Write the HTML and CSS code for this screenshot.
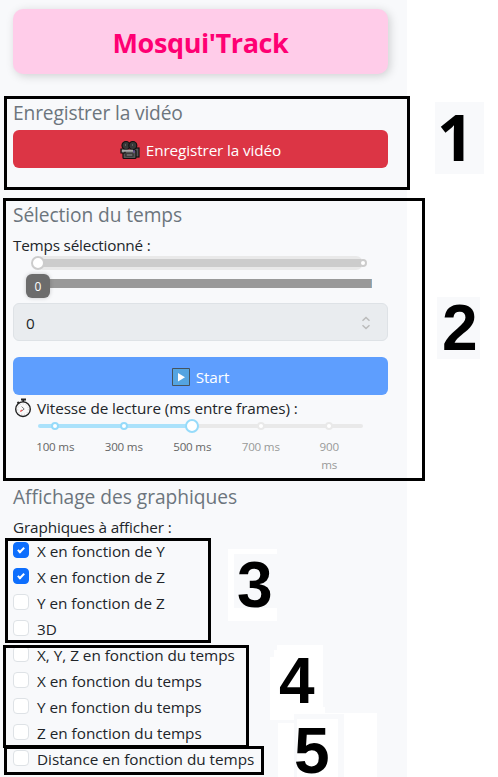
FILE: index.html
```html
<!DOCTYPE html>
<html lang="fr">
<head>
<meta charset="utf-8">
<title>Mosqui'Track</title>
<link rel="stylesheet" href="styles.css">
</head>
<body>
<aside class="sidebar">
  <h1 class="brand"><span>Mosqui'Track</span></h1>
  <section class="record">
    <h2>Enregistrer la vidéo</h2>
    <button class="btn danger">
      <svg width="20" height="20" viewBox="0 0 20 20"><g stroke="#111" stroke-width="1.2"><rect x="13" y="8" width="6" height="9" fill="#555"/><rect x="3" y="10" width="13" height="8.5" rx="1" fill="#555"/><path d="M1 9h4v4H1z" fill="#777"/><circle cx="6" cy="5.5" r="4" fill="#383838"/><circle cx="12.8" cy="5.5" r="4" fill="#383838"/></g><path d="M2 10.7h11" stroke="#aaa" stroke-width="2"/><path d="M5.5 15h8" stroke="#222" stroke-width="3"/><path d="M6.5 15h6" stroke="#aaa"/><path d="M14 10v3" stroke="#7653b5"/><path d="M5 5h1M12 5h1" stroke="#888"/></svg>
      <span class="t-record">Enregistrer la vidéo</span>
    </button>
  </section>
  <section class="time">
    <h2 class="h-time">Sélection du temps</h2>
    <label class="label t-time">Temps sélectionné :</label>
    <div class="range"><i class="handle"></i><i class="end"></i></div>
    <div class="marks"><b class="tip">0</b></div>
    <div class="field"><span>0</span>
      <svg width="10" height="14" viewBox="0 0 10 14" fill="none" stroke="#bbb" stroke-width="1.5"><path d="M1.5 4.8 5 1.5l3.5 3.3M1.5 9.2 5 12.5l3.5-3.3"/></svg>
    </div>
    <button class="btn primary">
      <svg width="18" height="18" viewBox="0 0 18 18"><path d="M.5.5h17v17H.5z" fill="#54a4e1" stroke="#46535d"/><path d="M6 5v8.5l7-4.25z" fill="#fff"/></svg>
      <span class="t-start">Start</span>
    </button>
    <div class="speed-label">
      <svg width="18" height="20" viewBox="0 0 18 20"><path d="M7 1.5h5" stroke="#222" stroke-width="2"/><path d="M9.3 2v2M3.5 4l1.5 1.5" stroke="#222" stroke-width="1.8"/><circle cx="9" cy="11.2" r="7.3" fill="#fafafa" stroke="#222" stroke-width="1.4"/><circle cx="9" cy="11.2" r="5.3" fill="none" stroke="#ccc" stroke-dasharray="1 2"/><path d="m7.6 8.6 2.6 2.4-2.6 2" fill="none" stroke="#777"/><path d="m6.2 13.4 2-1.5" stroke="#ef5555" stroke-width="1.3"/></svg>
      <span class="label t-speed">Vitesse de lecture (ms entre frames) :</span>
    </div>
    <div class="speed">
      <div class="stop on"><i></i><span>100 ms</span></div>
      <div class="stop on"><i></i><span>300 ms</span></div>
      <div class="stop on current"><i></i><span>500 ms</span></div>
      <div class="stop"><i></i><span>700 ms</span></div>
      <div class="stop"><i></i><span>900<br>ms</span></div>
    </div>
  </section>
  <section class="charts">
    <h2 class="h-charts">Affichage des graphiques</h2>
    <div class="label t-charts">Graphiques à afficher :</div>
    <div class="checks">
      <label><i class="box checked"></i><span>X en fonction de Y</span></label>
      <label><i class="box checked"></i><span>X en fonction de Z</span></label>
      <label><i class="box"></i><span>Y en fonction de Z</span></label>
      <label><i class="box"></i><span>3D</span></label>
      <label><i class="box"></i><span>X, Y, Z en fonction du temps</span></label>
      <label><i class="box"></i><span>X en fonction du temps</span></label>
      <label><i class="box"></i><span>Y en fonction du temps</span></label>
      <label><i class="box"></i><span>Z en fonction du temps</span></label>
      <label><i class="box"></i><span>Distance en fonction du temps</span></label>
    </div>
  </section>
</aside>
<div class="frame f1"></div><div class="frame f2"></div><div class="frame f3"></div><div class="frame f4"></div><div class="frame f5"></div>
<div class="patch p1"></div><div class="patch p2"></div><div class="patch p3"></div>
<svg class="patches" width="110" height="132" viewBox="0 0 110 132"><path d="M7 0h46v62h2v6h52v64H8V75H0V12h4V5h3z" fill="#fff"/><path d="M0 75h24v-6h50v63H24V78H0z" fill="#f8f9fb"/><path d="M27 74h41v58H27z" fill="#fff"/></svg>
<strong class="num n1">1</strong><strong class="num n2">2</strong><strong class="num n3">3</strong><strong class="num n4">4</strong><strong class="num n5">5</strong>
</body>
</html>
```

FILE: styles.css
```css
* { box-sizing: border-box; }
body {
  position: relative;
  width: 498px;
  height: 777px;
  margin: 0;
  overflow: hidden;
  background: #fff;
  color: #212529;
  font: 15.3px/24px "Open Sans", "Noto Sans", sans-serif;
  letter-spacing: -.02px;
}
h1, h2 { margin: 0; }
span, h2, .label { white-space: nowrap; }
svg { display: block; flex: none; }
.sidebar {
  width: 407px;
  height: 777px;
  padding: 9px 19px 0 13px;
  background: #f8f9fb;
}
.brand {
  height: 65px;
  border-radius: 10px;
  background: #ffcce9;
  box-shadow: 2px 2px 10px rgba(0, 0, 0, .17);
  color: #ff0073;
  font-size: 27px;
  line-height: 67px;
  text-align: center;
  letter-spacing: -.4px;
}
h2 {
  height: 24px;
  color: #6c757d;
  font-size: 19.2px;
  font-weight: 400;
  line-height: 25px;
  letter-spacing: -.15px;
}
.h-time { letter-spacing: -.1px; }
.h-charts { letter-spacing: -.04px; }
.record { height: 102px; margin-top: 26px; }
.btn {
  display: flex;
  width: 100%;
  height: 38px;
  margin: 6px 0 0;
  padding: 2px 0 0;
  align-items: center;
  justify-content: center;
  gap: 6px;
  border: 0;
  border-radius: 6px;
  color: #fff;
  font: inherit;
  letter-spacing: -.12px;
}
.danger { background: #dc3545; }
.primary { margin-top: 16px; background: #5e9efe; }
.label { display: block; height: 24px; letter-spacing: -.14px; }
.time { height: 282px; }
.t-time { margin-top: 7px; height: 23px; letter-spacing: -.2px; }
.t-speed { letter-spacing: -.09px; }
.range {
  position: relative;
  height: 14px;
  margin: 0 25px 0 23px;
  padding: 3px 2px;
  border-radius: 7px;
  background: #e9e9e9;
}
.range::before { content: ""; display: block; height: 8px; background: #ccc; }
.handle, .end { position: absolute; border: 2px solid #ccc; border-radius: 50%; background: #fff; }
.handle { left: -7px; top: 0; width: 14px; height: 14px; }
.end { right: -4px; top: 3px; width: 8px; height: 8px; }
.range .handle { left: -5px; }
.marks { position: relative; height: 9px; margin: 9px 16px 15px 25px; background: #999; border-right: 1px solid #8cabc0; }
.tip {
  position: absolute;
  left: -12px;
  top: -5px;
  width: 24px;
  height: 24px;
  border-radius: 6px;
  background: #6c6c6c;
  box-shadow: 0 0 4px rgba(0, 0, 0, .2);
  color: #fff;
  font-size: 12px;
  font-weight: 400;
  line-height: 25px;
  text-align: center;
}
.field {
  display: flex;
  height: 38px;
  padding: 2px 16px 0 12px;
  align-items: center;
  justify-content: space-between;
  border: 1px solid #dee2e6;
  border-radius: 6px;
  background: #e9ecef;
}
.speed-label { display: flex; height: 25px; margin: 3px 0 0 1px; align-items: flex-start; gap: 5px; }
.speed-label .label { margin-top: -2px; }
.speed {
  position: relative;
  display: grid;
  grid-template-columns: repeat(5, 68.5px);
  height: 60px;
  margin-left: 8px;
}
.speed::before {
  content: "";
  position: absolute;
  left: 17px;
  top: 1px;
  width: 325px;
  height: 4px;
  border-radius: 2px;
  background: linear-gradient(90deg, #abe2fb 154px, #e9e9e9 154px);
}
.stop { display: flex; flex-direction: column; align-items: center; color: #999; font-size: 11.6px; line-height: 18px; text-align: center; letter-spacing: -.2px; }
.stop i { position: relative; width: 8px; height: 8px; margin: -1px 0 8px; border: 2px solid #e9e9e9; border-radius: 50%; background: #fff; }
.on { color: #666; }
.on i { border-color: #96dbfa; }
.current i { width: 14px; height: 14px; margin: -4px 0 5px; }
.charts .label { margin-top: 7px; }
.checks label { display: flex; height: 26px; align-items: flex-start; gap: 8px; }
.box { width: 16px; height: 16px; margin-top: 3px; flex: none; border: 1px solid #dee2e6; border-radius: 4px; background: #fff; }
.checked { padding: 4px 0 0 5px; border-color: #0d6efd; background: #0d6efd; }
.checked::before { content: ""; display: block; width: 4px; height: 7px; box-sizing: border-box; margin-top: -1px; border: solid #fff; border-width: 0 2px 2px 0; transform: rotate(45deg); }
.frame { position: absolute; border: 3px solid #000; }
.f1 { left: 4px; top: 96px; width: 406px; height: 94px; }
.f2 { left: 3px; top: 198px; width: 422px; height: 283px; }
.f3 { left: 5px; top: 538px; width: 206px; height: 105px; }
.f4 { left: 3px; top: 645px; width: 246px; height: 103px; }
.f5 { left: 4px; top: 746px; width: 260px; height: 29px; }
.patch { position: absolute; background: #f8f9fb; }
.p1 { left: 435px; top: 102px; width: 49px; height: 72px; }
.p2 { left: 437px; top: 297px; width: 43px; height: 62px; }
.p3 { left: 228px; top: 549px; width: 49px; height: 72px; border: solid #fff; border-width: 5px 0 13px 6px; }
.patches { position: absolute; left: 270px; top: 645px; }
.num { position: absolute; color: #000; font: bold 64px/64px "Liberation Sans", Arial, sans-serif; letter-spacing: 0; }
.n1 { left: 437px; top: 105px; font-family: "Open Sans", sans-serif; }
.n2 { left: 442px; top: 296px; }
.n3 { left: 237px; top: 553px; }
.n4 { left: 279px; top: 649px; }
.n5 { left: 294px; top: 725px; line-height: 52px; }
```
